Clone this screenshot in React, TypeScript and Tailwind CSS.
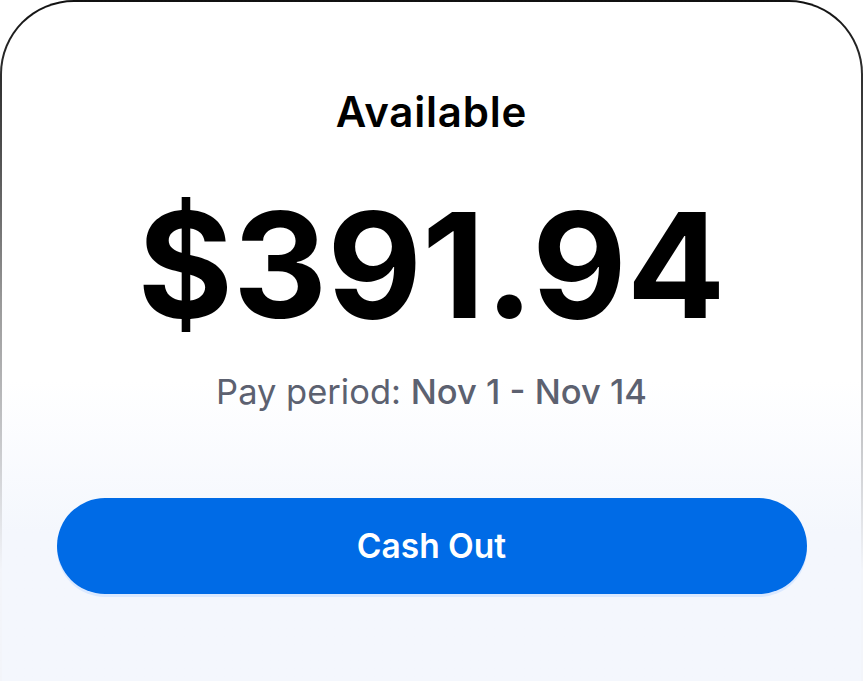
import React from 'react';

const App: React.FC = () => {
  return (
    <div className="h-[681px] w-[864px] overflow-hidden bg-white" style={{ fontFamily: 'Inter, "Noto Sans", sans-serif' }}>
      {/* gradient border: dark at the top, fading out toward the bottom */}
      <div className="h-[760px] w-[863px] rounded-t-[74px] bg-gradient-to-b from-[#111111] via-[#9a9a9a] via-40% to-[#f3f5fa] to-75% px-[2px] pt-[2px]">
        <div className="flex h-full flex-col items-center rounded-t-[72px] bg-gradient-to-b from-white from-50% to-[#f4f7fd] to-70%">
          <h2 className="mt-[86px] text-[42px] font-semibold leading-[48px] tracking-[0.8px] text-black">
            Available
          </h2>
          <div className="mt-[49px] text-[146px] font-bold leading-[160px] text-black">
            $391.94
          </div>
          <p className="mt-[27px] text-[34.5px] leading-[40px] text-[#5c6170]">
            Pay period: <span className="font-medium">Nov 1 - Nov 14</span>
          </p>
          <button className="mt-[86px] flex h-[96px] w-[750px] items-center justify-center rounded-full bg-[#006be6] text-[33.5px] font-semibold text-white shadow-[0_3px_0_0_#dbe9ff]">
            Cash Out
          </button>
        </div>
      </div>
    </div>
  );
};

export default App;
